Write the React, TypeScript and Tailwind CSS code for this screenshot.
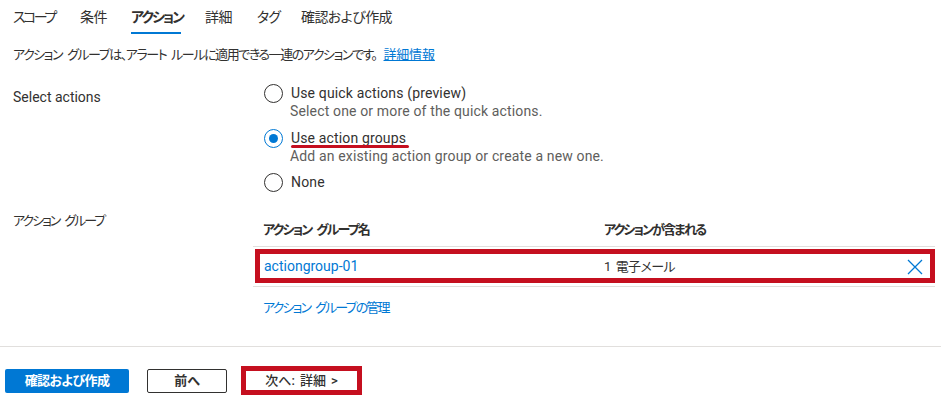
import React from "react";

const Radio = ({ checked }: { checked?: boolean }) => (
  <span
    className={
      "flex h-[19px] w-[19px] shrink-0 items-center justify-center rounded-full border " +
      (checked ? "border-[#0078d4]" : "border-[#323130]")
    }
  >
    {checked && <span className="h-[9px] w-[9px] rounded-full bg-[#0078d4]" />}
  </span>
);

const Sp = () => <span className="inline-block w-[5px]" />;

export default function App() {
  const tabs = [
    { t: "スコープ", w: "w-[67px]", tr: "tracking-[-2.5px]" },
    { t: "条件", w: "w-[51px]", tr: "tracking-[-0.5px]" },
    { t: "アクション", w: "w-[74px]", tr: "tracking-[-2px]" },
    { t: "詳細", w: "w-[52px]", tr: "tracking-[-0.5px]" },
    { t: "タグ", w: "w-[44px]", tr: "tracking-[-1px]" },
    { t: "確認および作成", w: "w-[100px]", tr: "tracking-[-0.6px]" },
  ];
  return (
    <div className="relative h-[398px] w-[941px] overflow-hidden bg-white text-[#323130] [font-family:Roboto,'Noto_Sans_CJK_JP',sans-serif] [font-feature-settings:'palt']">
      {/* Tabs */}
      <div className="flex h-[34px] pl-[13px]">
        {tabs.map(({ t, w, tr }) => (
          <div key={t} className={"flex h-full " + w}>
            <div
              className={
                "relative flex h-full items-center whitespace-nowrap text-[14px] " +
                tr +
                (t === "アクション" ? " font-semibold" : "")
              }
            >
              {t}
              {t === "アクション" && (
                <span className="absolute bottom-0 left-0 right-[2px] h-[2px] bg-[#0078d4]" />
              )}
            </div>
          </div>
        ))}
      </div>

      {/* Description */}
      <div className="mt-[12px] flex h-[18px] items-center whitespace-nowrap pl-[13px] text-[13px] tracking-[-1.45px]">
        アクション<Sp />グループは、アラート<Sp />ルールに適用できる一連のアクションです。
        <span className="ml-[7px] tracking-[-0.2px] text-[#0078d4] underline">詳細情報</span>
      </div>

      {/* Select actions */}
      <div className="mt-[20px] flex">
        <div className="w-[250px] pl-[13px] pt-[3px] text-[14px] leading-[20px]">Select actions</div>
        <div className="flex flex-col text-[14px] tracking-[0.15px]">
          <div className="flex h-[19px] items-center gap-[8px] pl-[14px]">
            <Radio />
            <span>Use quick actions (preview)</span>
          </div>
          <div className="flex h-[16px] items-center pl-[40px] text-[#605e5c]">
            Select one or more of the quick actions.
          </div>
          <div className="mt-[10px] flex h-[19px] items-center gap-[8px] pl-[14px]">
            <Radio checked />
            <span className="relative">
              Use action groups
              <span className="absolute left-0 right-[-3px] top-[17px] h-[3px] rounded-full bg-[#c50f1f]" />
            </span>
          </div>
          <div className="flex h-[16px] items-center pl-[40px] text-[#605e5c]">
            Add an existing action group or create a new one.
          </div>
          <div className="mt-[9px] flex h-[19px] items-center gap-[8px] pl-[14px]">
            <Radio />
            <span>None</span>
          </div>
        </div>
      </div>

      {/* Action groups */}
      <div className="mt-[21px] flex">
        <div className="w-[253px] whitespace-nowrap pl-[13px] text-[13px] leading-[16px] tracking-[-2px]">
          アクション<Sp />グループ
        </div>
        <div className="w-[682px]">
          <div className="flex h-[34px] items-end whitespace-nowrap border-b border-[#e1dfdd] pb-[7px] text-[13px] font-semibold">
            <div className="w-[351px] pl-[10px] tracking-[-1.85px]">
              アクション<Sp />グループ名
            </div>
            <div className="tracking-[-1.9px]">アクションが含まれる</div>
          </div>
          <div className="relative flex h-[40px] items-center border-b border-[#e1dfdd] text-[13px]">
            <div className="w-[351px] pl-[11px] text-[14px] text-[#0078d4]">actiongroup-01</div>
            <div className="flex-1 whitespace-nowrap tracking-[-0.6px]">
              1<Sp />電子メール
            </div>
            <svg className="mr-[12px]" width="16" height="16" viewBox="0 0 16 16">
              <path d="M1 1 L15 15 M15 1 L1 15" stroke="#0078d4" strokeWidth="1.3" fill="none" />
            </svg>
            <div className="absolute left-[2px] right-0 top-[2px] h-[34px] border-[5px] border-[#c50f1f]" />
          </div>
          <div className="mt-[13px] whitespace-nowrap pl-[10px] text-[13px] leading-[16px] tracking-[-1.85px] text-[#0078d4]">
            アクション<Sp />グループの管理
          </div>
        </div>
      </div>

      {/* Footer */}
      <div className="absolute left-0 right-0 top-[346px] border-t border-[#e1dfdd]" />
      <div className="absolute left-0 top-[347px] flex w-full items-center pl-[5px] pt-[19px]">
        <button className="h-[24px] w-[124px] whitespace-nowrap rounded-[2px] bg-[#0078d4] text-[13px] font-semibold tracking-[-0.6px] text-white">
          確認および作成
        </button>
        <button className="ml-[18px] h-[24px] w-[80px] rounded-[2px] border border-[#323130] bg-white text-[13px] font-semibold">
          前へ
        </button>
        <button className="ml-[14px] h-[29px] w-[121px] whitespace-nowrap border-[5px] border-[#c50f1f] bg-white text-[13px] font-medium">
          次へ:<Sp />詳細<Sp />&gt;
        </button>
      </div>
    </div>
  );
}
